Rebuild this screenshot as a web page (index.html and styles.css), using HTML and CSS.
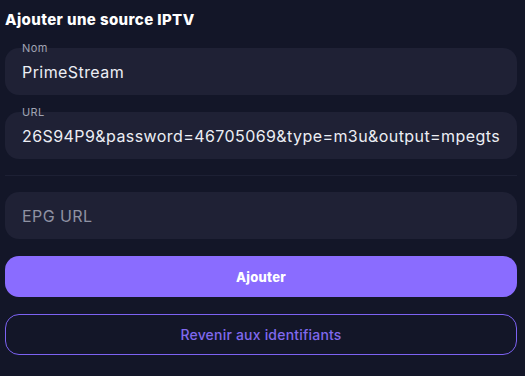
FILE: index.html
```html
<!DOCTYPE html>
<html lang="fr">
<head>
  <meta charset="UTF-8">
  <meta name="viewport" content="width=device-width, initial-scale=1.0">
  <title>Ajouter une source IPTV</title>
  <link rel="stylesheet" href="styles.css">
</head>
<body>

  <form class="source-form">
    <h1 class="form-title">Ajouter une source IPTV</h1>

    <!-- Champs de la source -->
    <div class="field">
      <label class="field-label" for="name">Nom</label>
      <input class="field-input" id="name" type="text" value="PrimeStream">
    </div>

    <div class="field">
      <label class="field-label" for="url">URL</label>
      <input class="field-input" id="url" type="text" value="26S94P9&amp;password=46705069&amp;type=m3u&amp;output=mpegts">
    </div>

    <hr class="divider">

    <div class="field">
      <input class="field-input" id="epg" type="text" placeholder="EPG URL">
    </div>

    <!-- Actions -->
    <button type="button" class="btn btn-primary">Ajouter</button>
    <button type="button" class="btn btn-outline">Revenir aux identifiants</button>
  </form>

</body>
</html>
```

FILE: styles.css
```css
/* Page */
body {
  margin: 0;
  background-color: #131628;
  font-family: 'Inter', 'Liberation Sans', sans-serif;
  color: #e8e9ef;
}

.source-form {
  display: flex;
  flex-direction: column;
  width: 512px;
  padding: 10px 0 0 5px;
}

.form-title {
  margin: 0 0 18px 0;
  font-size: 15px;
  line-height: 20px;
  font-weight: 800;
  letter-spacing: 0.4px;
  color: #ffffff;
}

/* CSS styles for the fields */
.field {
  position: relative;
  margin-bottom: 17px;
}

.field-label {
  position: absolute;
  top: -6px;
  left: 17px;
  font-size: 11px;
  line-height: 13px;
  letter-spacing: 0.4px;
  color: #a0a3b2;
}

.field-input {
  display: block;
  box-sizing: border-box;
  width: 100%;
  height: 47px;
  padding: 0 16px 0 17px;
  border: none;
  border-radius: 14px;
  background-color: #1f2135;
  color: #eceef4;
  font-family: inherit;
  font-size: 16px;
  letter-spacing: 0.42px;
  outline: none;
}

.field-input::placeholder {
  color: #8f92a3;
}

.divider {
  width: 100%;
  height: 1px;
  margin: -1px 0 16px 0;
  border: none;
  background-color: #1d2034;
}

/* CSS styles for the buttons */
.btn {
  display: block;
  width: 100%;
  height: 41px;
  border-radius: 14px;
  font-family: inherit;
  cursor: pointer;
}

.btn-primary {
  margin-bottom: 17px;
  border: none;
  background-color: #8a6cff;
  color: #ffffff;
  font-size: 13px;
  font-weight: 800;
  letter-spacing: 0.3px;
}

.btn-primary:hover {
  background-color: #7f60f5;
}

.btn-outline {
  border: 1px solid #7c62f2;
  background-color: transparent;
  color: #8069ee;
  font-size: 14px;
  font-weight: 500;
  letter-spacing: 0.2px;
}
```
